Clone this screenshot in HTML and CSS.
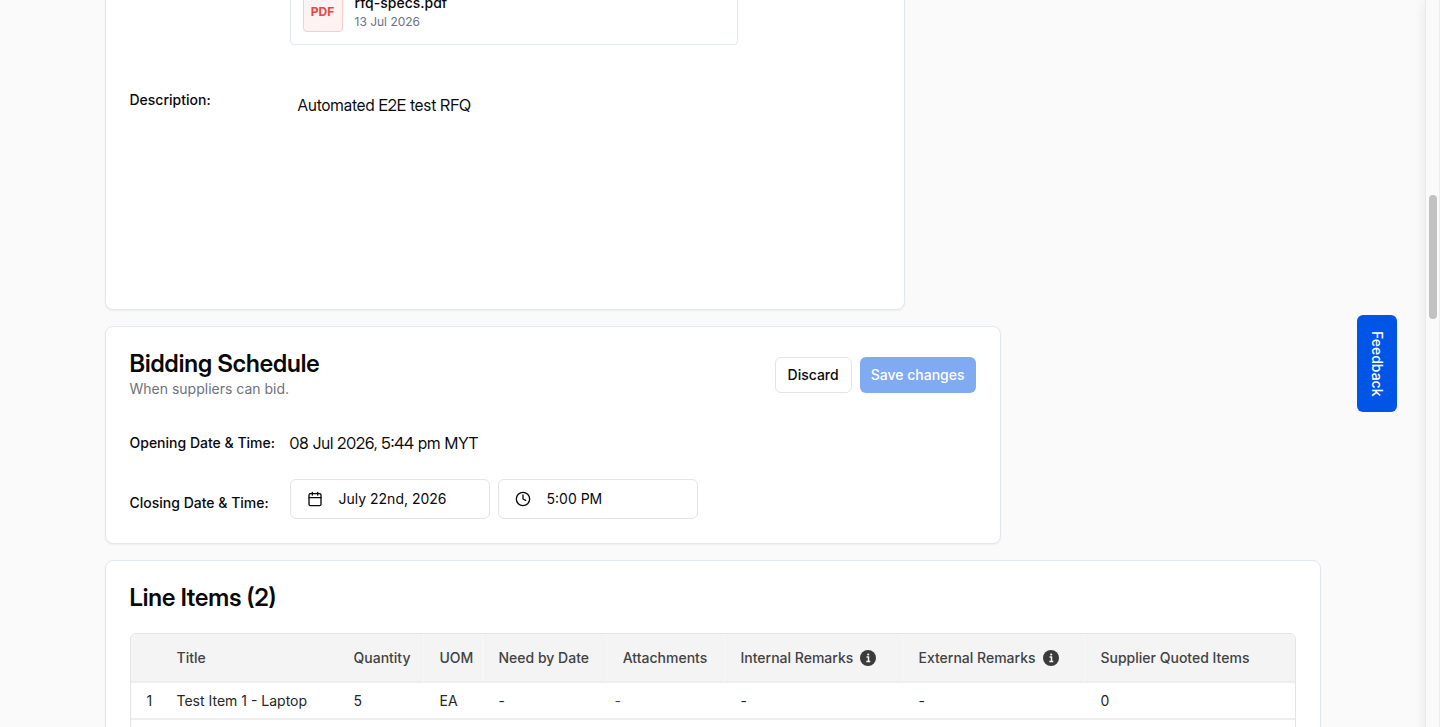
FILE: index.html
```html
<!DOCTYPE html>
<html lang="en">
<head>
<meta charset="utf-8">
<meta name="viewport" content="width=device-width, initial-scale=1">
<title>RFQ</title>
<link rel="stylesheet" href="styles.css">
</head>
<body>
<div class="shell">
  <main class="content">
    <section class="card card-details">
      <div class="row">
        <div class="file">
          <span class="file-type">PDF</span>
          <div class="file-info">
            <span class="file-name">rfq-specs.pdf</span>
            <span class="file-date">13 Jul 2026</span>
          </div>
        </div>
      </div>
      <div class="row row-description">
        <span class="label label-offset">Description:</span>
        <p class="description">Automated E2E test RFQ</p>
      </div>
    </section>

    <section class="card card-schedule">
      <header class="card-header">
        <div>
          <h2 class="title">Bidding Schedule</h2>
          <p class="subtitle">When suppliers can bid.</p>
        </div>
        <div class="actions">
          <button type="button" class="btn btn-outline">Discard</button>
          <button type="button" class="btn btn-primary" disabled>Save changes</button>
        </div>
      </header>
      <div class="row row-center row-opening">
        <span class="label">Opening Date &amp; Time:</span>
        <p class="value">08 Jul 2026, 5:44 pm MYT</p>
      </div>
      <div class="row row-center row-closing">
        <label class="label label-offset" for="closing-date">Closing Date &amp; Time:</label>
        <div class="pickers">
          <button type="button" class="picker" id="closing-date">
            <svg class="icon" viewBox="0 0 24 24" aria-hidden="true"><path d="M8 2v4M16 2v4M3 10h18"/><rect x="3" y="4" width="18" height="18" rx="2"/></svg>
            <span>July 22nd, 2026</span>
          </button>
          <button type="button" class="picker">
            <svg class="icon" viewBox="0 0 24 24" aria-hidden="true"><circle cx="12" cy="12" r="10"/><path d="M12 6v6l4 2"/></svg>
            <span>5:00 PM</span>
          </button>
        </div>
      </div>
    </section>

    <section class="card card-items">
      <h2 class="title">Line Items (2)</h2>
      <div class="table-wrap">
        <table class="items">
          <colgroup>
            <col class="c-index"><col class="c-title"><col class="c-qty"><col class="c-uom"><col class="c-date"><col class="c-files"><col class="c-internal"><col class="c-external"><col>
          </colgroup>
          <thead>
            <tr>
              <th class="flush"></th>
              <th class="flush">Title</th>
              <th>Quantity</th>
              <th>UOM</th>
              <th>Need by Date</th>
              <th class="centered">Attachments</th>
              <th><span class="with-info">Internal Remarks <svg class="info" viewBox="0 0 16 16" aria-hidden="true"><circle cx="8" cy="8" r="8"/><path d="M6.500 7h2v4.500M6.300 11.500h4"/><circle class="dot" cx="8.200" cy="4.500" r="1.100"/></svg></span></th>
              <th><span class="with-info">External Remarks <svg class="info" viewBox="0 0 16 16" aria-hidden="true"><circle cx="8" cy="8" r="8"/><path d="M6.500 7h2v4.500M6.300 11.500h4"/><circle class="dot" cx="8.200" cy="4.500" r="1.100"/></svg></span></th>
              <th>Supplier Quoted Items</th>
            </tr>
          </thead>
          <tbody>
            <tr><td class="flush">1</td><td class="flush">Test Item 1 - Laptop</td><td>5</td><td>EA</td><td>-</td><td class="files">-</td><td>-</td><td>-</td><td>0</td></tr>
            <tr><td class="flush"></td><td class="flush"></td><td></td><td></td><td></td><td></td><td></td><td></td><td></td></tr>
          </tbody>
        </table>
      </div>
    </section>
  </main>
  <div class="scroll-track" aria-hidden="true"><div class="scroll-thumb"></div></div>
</div>
<button type="button" class="feedback">Feedback</button>
</body>
</html>
```

FILE: styles.css
```css
*, *::before, *::after { box-sizing: border-box; }

body {
  margin: 0;
  overflow: hidden;
  background: #fafafa;
  color: #09090b;
  font-family: Inter, "Liberation Sans", sans-serif;
  font-size: 14px;
  line-height: 20px;
}

h2, p { margin: 0; }

button { font: inherit; color: inherit; }

.shell {
  display: grid;
  grid-template-columns: minmax(0, 1fr) 15px;
  height: 100vh;
  overflow: hidden;
}

/* The page is scrolled part-way into the details card. */
.content {
  display: flex;
  flex-direction: column;
  gap: 16px;
  width: 100%;
  max-width: 1216px;
  margin: -46px auto 0;
}

.card {
  width: 100%;
  padding: 24px;
  background: #fff;
  border: 1px solid #e2e8f0;
  border-radius: 8px;
  box-shadow: 0 1px 2px rgba(0, 0, 0, 0.05);
}

.card-details {
  display: flex;
  flex-direction: column;
  gap: 40px;
  max-width: 800px;
}
.card-schedule { max-width: 896px; }

.row {
  display: grid;
  grid-template-columns: 160px minmax(0, 1fr);
}
.row-center { align-items: center; }
.row-description { min-height: 200px; }
.row-opening { margin-top: 32px; }
.row-closing { margin-top: 24px; }

.label {
  font-weight: 500;
  line-height: 14px;
}
.label-offset { padding-top: 8px; }

.value, .description {
  font-family: "Inter Display", Inter, "Liberation Sans", sans-serif;
  font-size: 16px;
  line-height: 24px;
}
.description { padding: 8px; }

.file {
  grid-column: 2;
  display: flex;
  align-items: center;
  gap: 12px;
  max-width: 448px;
  padding: 12px;
  border: 1px solid #e2e8f0;
  border-radius: 4px;
}
.file-type {
  display: grid;
  place-items: center;
  width: 40px;
  height: 40px;
  background: #fef2f2;
  border: 1px solid #fecaca;
  border-radius: 4px;
  color: #ef4444;
  font-size: 12px;
  font-weight: 700;
}
.file-info { display: flex; flex-direction: column; }
.file-name { font-weight: 500; }
.file-date {
  color: #6b7280;
  font-size: 12px;
  line-height: 18px;
}

.card-header {
  display: flex;
  align-items: center;
  justify-content: space-between;
}
.title {
  font-family: "Inter Display", Inter, "Liberation Sans", sans-serif;
  font-size: 24px;
  font-weight: 600;
  letter-spacing: normal;
  line-height: 26px;
}
.subtitle {
  margin-top: 2px;
  color: #71717a;
}

.actions, .pickers { display: flex; gap: 8px; }

.btn {
  height: 36px;
  padding: 0 12px;
  border: 1px solid transparent;
  border-radius: 6px;
  font-weight: 500;
}
.btn-outline { background: #fff; border-color: #e4e4e7; }
.btn-primary {
  padding: 0 11px;
  border: 0;
  background: #80aaf2;
  color: #fff;
}

.picker {
  display: flex;
  align-items: center;
  gap: 16px;
  width: 200px;
  height: 40px;
  padding: 0 16px;
  background: #fff;
  border: 1px solid #e4e4e7;
  border-radius: 6px;
  text-align: left;
}
.icon {
  width: 16px;
  height: 16px;
  fill: none;
  stroke: currentColor;
  stroke-width: 2;
  stroke-linecap: round;
  stroke-linejoin: round;
}

.table-wrap {
  margin-top: 22px;
  overflow: hidden;
  border: 1px solid #e4e4e4;
  border-radius: 6px;
}
.items {
  width: 100%;
  table-layout: fixed;
  border-collapse: separate;
  border-spacing: 0;
}
.c-index { width: 30px; }
.c-title { width: 177px; }
.c-qty { width: 86px; }
.c-uom { width: 59px; }
.c-date { width: 124px; }
.c-files { width: 118px; }
.c-internal { width: 178px; }
.c-external { width: 182px; }

.items th, .items td {
  padding: 0 0 0 16px;
  border-bottom: 2px solid #eeeeee;
  text-align: left;
  white-space: nowrap;
}
.items th {
  height: 49px;
  background: #f4f4f4;
  border-right: 1px solid #f8f8f8;
  color: #424242;
  font-weight: 500;
}
.items td {
  height: 37px;
  color: #262626;
}
.items th.flush, .items th:last-child { border-right: 0; }
.items th.centered { padding: 0; text-align: center; }
.items td.files { padding-left: 8px; color: #0055e6; }

.with-info {
  display: flex;
  align-items: center;
  gap: 7px;
}
.info {
  width: 16px;
  height: 16px;
  fill: #3b3b3b;
}
.info path {
  fill: none;
  stroke: #f4f4f4;
  stroke-width: 1.5;
}
.info .dot { fill: #f4f4f4; }

.scroll-track {
  padding: 195px 2px 0 3px;
  background: #fafafa;
  border-left: 1px solid #e8e8e8;
  border-right: 1px solid #ededed;
  box-shadow: -2px 0 12px rgba(0, 0, 0, 0.06);
}
.scroll-thumb {
  height: 124px;
  background: #c1c1c1;
  border-radius: 4px;
}

.feedback {
  position: fixed;
  top: 0;
  right: 43px;
  bottom: 0;
  width: 40px;
  height: fit-content;
  margin: auto 0;
  padding: 16px 0;
  background: #0055e6;
  border: 0;
  border-radius: 6px;
  color: #fff;
  font-weight: 500;
  writing-mode: vertical-rl;
}
```
